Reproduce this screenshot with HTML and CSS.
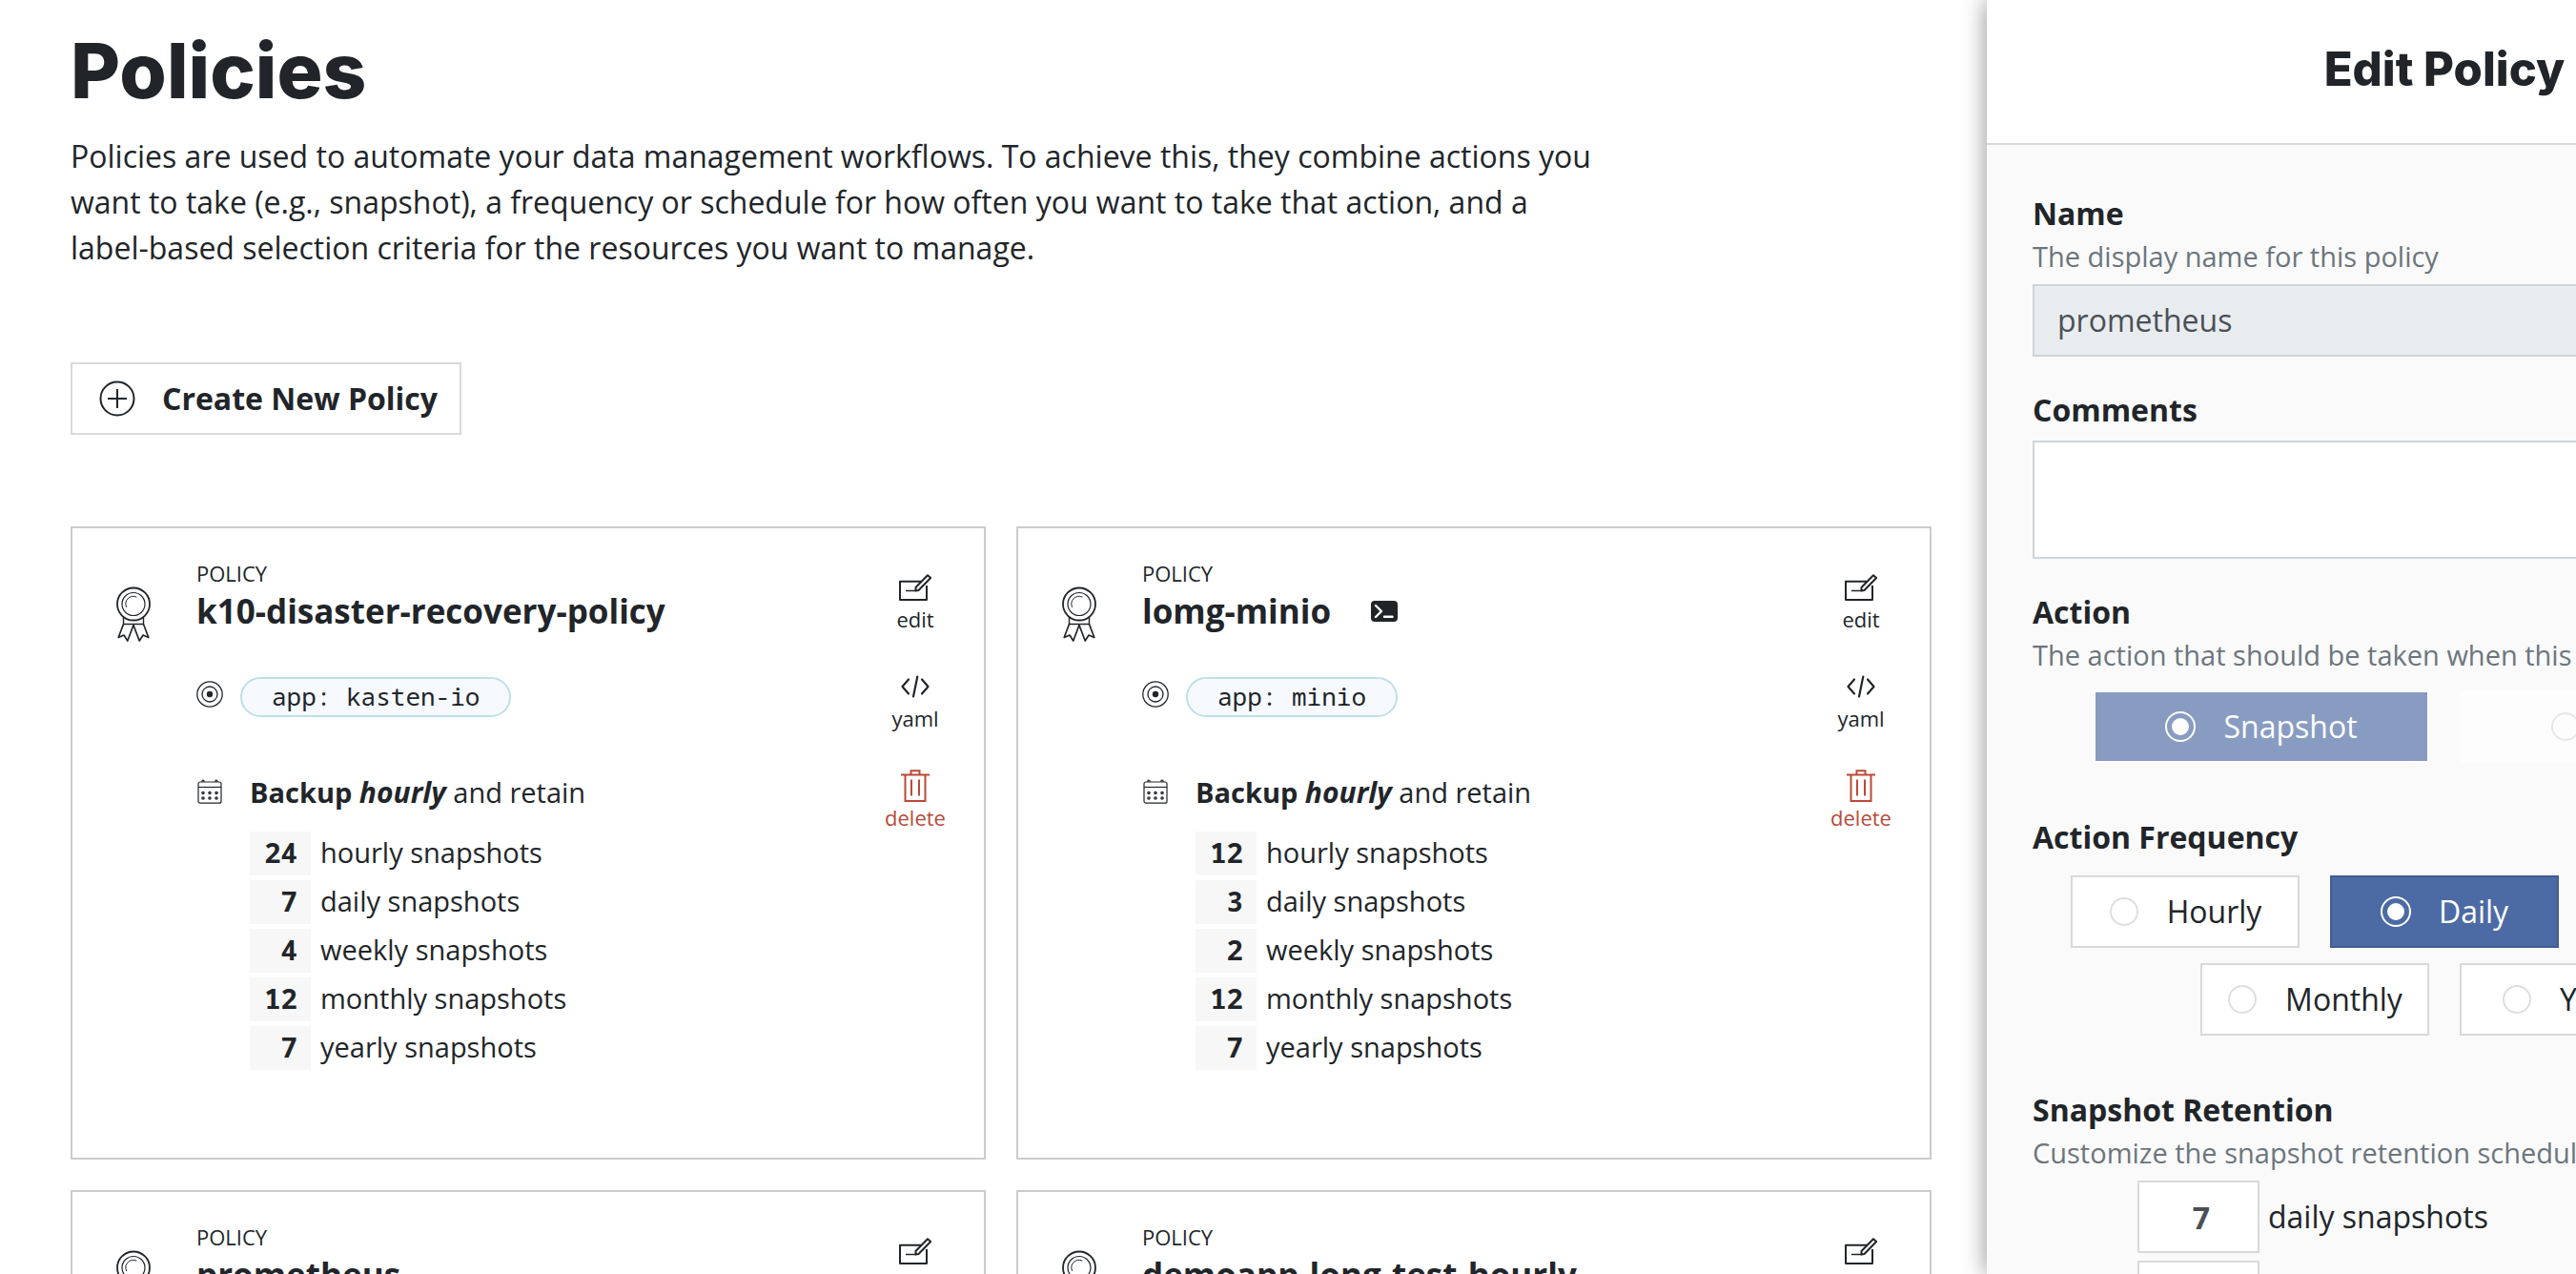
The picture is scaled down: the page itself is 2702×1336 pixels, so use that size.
FILE: index.html
```html
<!DOCTYPE html>
<html lang="en">
<head>
<meta charset="utf-8">
<title>Policies</title>
<meta name="viewport" content="width=device-width, initial-scale=1">
<link rel="stylesheet" href="styles.css">
</head>
<body>
<svg class="sprite" aria-hidden="true">
  <symbol id="i-award" viewBox="0 0 36 58">
    <g fill="none" stroke="currentColor" stroke-linejoin="round" stroke-linecap="round">
      <circle cx="18" cy="18.500" r="17" stroke-width="1.800"/>
      <circle cx="18" cy="18.500" r="12" stroke-width="1.200"/>
      <path d="M10.500 21.500a8 8 0 0 1 10.500-10.500" stroke-width="1"/>
      <path d="M7.500 32v7.500h21V32" stroke-width="1.400"/>
      <path d="M7.500 39.500 2.200 53.500l5.800-2.500 3.800 6L18 40.500l6.200 16.500 3.800-6 5.800 2.500-5.300-14" stroke-width="1.700"/>
    </g>
  </symbol>
  <symbol id="i-target" viewBox="0 0 28 28">
    <circle cx="14" cy="14" r="13.200" fill="none" stroke="currentColor" stroke-width="1.300"/>
    <circle cx="14" cy="14" r="8" fill="none" stroke="currentColor" stroke-width="1.300"/>
    <circle cx="14" cy="14" r="3.200" fill="currentColor"/>
  </symbol>
  <symbol id="i-calendar" viewBox="0 0 28 26">
    <g fill="none" stroke="currentColor" stroke-width="1.200">
      <rect x="2" y="3" width="24" height="22.200" rx="2"/>
      <path d="M2 8.500h24"/>
      <path d="M6 3V2a1 1 0 0 1 2 0v1M20 3V2a1 1 0 0 1 2 0v1"/>
      <g stroke-width="1.400">
        <circle cx="7" cy="14.500" r="1.100"/><circle cx="14" cy="14.500" r="1.100"/><circle cx="21" cy="14.500" r="1.100"/>
        <circle cx="7" cy="20" r="1.100"/><circle cx="14" cy="20" r="1.100"/><circle cx="21" cy="20" r="1.100"/>
      </g>
    </g>
  </symbol>
  <symbol id="i-edit" viewBox="0 0 34 34">
    <g fill="none" stroke="currentColor" stroke-width="2" stroke-linejoin="round">
      <path d="M23 10.800H1V30h28V15"/>
      <path d="M7 20.500h11" stroke-width="1.500"/>
      <path d="M17.500 20.500v-3.500L30 4.200l3.200 2.800L20.500 20z"/>
    </g>
  </symbol>
  <symbol id="i-code" viewBox="0 0 34 34">
    <g fill="none" stroke="currentColor" stroke-width="2.200" stroke-linecap="round" stroke-linejoin="round">
      <path d="M10 9.500 3.500 17l6.500 7.500M24 9.500l6.500 7.500-6.500 7.500"/>
      <path d="M19.300 6.500 15 27.500"/>
    </g>
  </symbol>
  <symbol id="i-trash" viewBox="0 0 34 34">
    <g fill="none" stroke="currentColor" stroke-width="2">
      <path d="M2 5.500h30M6.500 5.500v27.500h21V5.500M12.500 5.500V1.200h9v4.300"/>
      <path d="M13 10.500v17M21 10.500v17"/>
    </g>
  </symbol>
  <symbol id="i-plus" viewBox="0 0 38 38">
    <g fill="none" stroke="currentColor" stroke-width="2">
      <circle cx="19" cy="19" r="17.500"/><path d="M19 9v20M9 19h20"/>
    </g>
  </symbol>
  <symbol id="i-terminal" viewBox="0 0 28 22">
    <rect width="28" height="22" rx="4" fill="currentColor"/>
    <path d="M5 5l6 6-6 6M14 16.800h8.500" fill="none" stroke="#fff" stroke-width="2.400" stroke-linecap="round" stroke-linejoin="round"/>
  </symbol>
</svg>

<div class="app">
  <main class="main">
    <h1 class="page-title">Policies</h1>
    <p class="intro">Policies are used to automate your data management workflows. To achieve this, they combine actions you want to take (e.g., snapshot), a frequency or schedule for how often you want to take that action, and a label-based selection criteria for the resources you want to manage.</p>
    <button class="create" type="button"><svg class="create-icon"><use href="#i-plus"/></svg>Create New Policy</button>

    <div class="cards">
      <article class="card">
        <svg class="award"><use href="#i-award"/></svg>
        <div class="details">
          <p class="kind">POLICY</p>
          <h2 class="name">k10-disaster-recovery-policy</h2>
          <div class="selector"><svg class="target"><use href="#i-target"/></svg><code class="chip">app: kasten-io</code></div>
          <div class="schedule"><svg class="calendar"><use href="#i-calendar"/></svg><p><strong>Backup <em>hourly</em></strong> and retain</p></div>
          <ul class="retain">
            <li><b>24</b>hourly snapshots</li>
            <li><b>7</b>daily snapshots</li>
            <li><b>4</b>weekly snapshots</li>
            <li><b>12</b>monthly snapshots</li>
            <li><b>7</b>yearly snapshots</li>
          </ul>
        </div>
        <div class="actions">
          <button type="button"><svg><use href="#i-edit"/></svg>edit</button>
          <button type="button"><svg><use href="#i-code"/></svg>yaml</button>
          <button type="button" class="danger"><svg><use href="#i-trash"/></svg>delete</button>
        </div>
      </article>

      <article class="card">
        <svg class="award"><use href="#i-award"/></svg>
        <div class="details">
          <p class="kind">POLICY</p>
          <h2 class="name">lomg-minio <svg class="terminal"><use href="#i-terminal"/></svg></h2>
          <div class="selector"><svg class="target"><use href="#i-target"/></svg><code class="chip">app: minio</code></div>
          <div class="schedule"><svg class="calendar"><use href="#i-calendar"/></svg><p><strong>Backup <em>hourly</em></strong> and retain</p></div>
          <ul class="retain">
            <li><b>12</b>hourly snapshots</li>
            <li><b>3</b>daily snapshots</li>
            <li><b>2</b>weekly snapshots</li>
            <li><b>12</b>monthly snapshots</li>
            <li><b>7</b>yearly snapshots</li>
          </ul>
        </div>
        <div class="actions">
          <button type="button"><svg><use href="#i-edit"/></svg>edit</button>
          <button type="button"><svg><use href="#i-code"/></svg>yaml</button>
          <button type="button" class="danger"><svg><use href="#i-trash"/></svg>delete</button>
        </div>
      </article>

      <article class="card">
        <svg class="award"><use href="#i-award"/></svg>
        <div class="details">
          <p class="kind">POLICY</p>
          <h2 class="name">prometheus</h2>
        </div>
        <div class="actions">
          <button type="button" aria-label="edit"><svg><use href="#i-edit"/></svg></button>
        </div>
      </article>

      <article class="card">
        <svg class="award"><use href="#i-award"/></svg>
        <div class="details">
          <p class="kind">POLICY</p>
          <h2 class="name">demoapp-long-test-hourly</h2>
        </div>
        <div class="actions">
          <button type="button" aria-label="edit"><svg><use href="#i-edit"/></svg></button>
        </div>
      </article>
    </div>
  </main>

  <aside class="drawer">
    <header class="drawer-head"><h2 class="drawer-title">Edit Policy</h2></header>
    <form class="form">
      <div class="field">
        <label class="label" for="name">Name</label>
        <p class="hint">The display name for this policy</p>
        <input class="text" id="name" type="text" value="prometheus" readonly>
      </div>
      <div class="field">
        <label class="label" for="comments">Comments</label>
        <textarea class="text area" id="comments"></textarea>
      </div>
      <fieldset class="field">
        <legend class="label">Action</legend>
        <p class="hint">The action that should be taken when this policy is executed</p>
        <div class="choices wide">
          <label class="choice"><input type="radio" name="action" checked disabled>Snapshot</label>
          <label class="choice"><input type="radio" name="action" disabled>Import</label>
        </div>
      </fieldset>
      <fieldset class="field">
        <legend class="label">Action Frequency</legend>
        <div class="choices">
          <label class="choice"><input type="radio" name="frequency">Hourly</label>
          <label class="choice"><input type="radio" name="frequency" checked>Daily</label>
          <label class="choice"><input type="radio" name="frequency">Weekly</label>
          <label class="choice"><input type="radio" name="frequency">Monthly</label>
          <label class="choice"><input type="radio" name="frequency">Yearly</label>
        </div>
      </fieldset>
      <fieldset class="field">
        <legend class="label">Snapshot Retention</legend>
        <p class="hint">Customize the snapshot retention schedule</p>
        <div class="counts">
          <label class="count"><input type="text" value="7">daily snapshots</label>
          <label class="count"><input type="text" value="4" aria-label="weekly snapshots"></label>
        </div>
      </fieldset>
    </form>
  </aside>
</div>
</body>
</html>
```
FILE: styles.css
```css
*, *::before, *::after { box-sizing: border-box; }

:root {
  --ink: #212529;
  --muted: #6c757d;
  --line: #d9d9d9;
  --blue: #4c6ba5;
  --sans: "Open Sans", "Noto Sans", sans-serif;
  --display: Inter, "Open Sans", sans-serif;
  --mono: "Noto Sans Mono", "DejaVu Sans Mono", monospace;
}

body {
  margin: 0;
  overflow: hidden;
  background: #fff;
  color: var(--ink);
  font: 32px/48px var(--sans);
}

h1, h2, p, ul, fieldset { margin: 0; padding: 0; border: 0; font-weight: inherit; }
button, input, textarea { font: inherit; color: inherit; margin: 0; }
svg { display: block; flex: none; }
.sprite { position: absolute; width: 0; height: 0; }

.app { display: flex; height: 100vh; overflow: hidden; }

/* Policy list */
.main { flex: 1; min-width: 0; padding: 24px 58px 0 74px; overflow: hidden; }
.page-title { margin-bottom: 16px; font: 800 80px/100px var(--display); }
.intro { max-width: 1600px; margin-bottom: 96px; }

.create {
  display: flex;
  align-items: center;
  gap: 28px;
  height: 76px;
  margin-bottom: 96px;
  padding: 0 23px 0 28px;
  border: 2px solid var(--line);
  background: #fff;
  font-weight: 700;
}
.create-icon { width: 38px; height: 38px; }

.cards {
  display: grid;
  grid-template-columns: repeat(2, minmax(0, 1fr));
  grid-auto-rows: 1fr;
  gap: 32px;
}
.card {
  display: flex;
  gap: 48px;
  padding: 31px 40px 92px 46px;
  border: 2px solid #ccc;
}
.award { width: 36px; height: 58px; margin-top: 30px; }
.details { flex: 1; min-width: 0; font-size: 29px; line-height: 44px; }
.kind { font-size: 22px; line-height: 32px; }
.name { display: flex; align-items: center; gap: 42px; font-size: 35px; line-height: 48px; font-weight: 700; }
.terminal { width: 28px; height: 22px; }

.selector { display: flex; gap: 18px; margin-top: 45px; }
.target { width: 28px; height: 28px; margin-top: 4px; }
.chip {
  height: 42px;
  padding: 0 31px;
  border: 2px solid #bfdfe9;
  border-radius: 21px;
  background: #f6fafe;
  font: 26px/36px var(--mono);
}

.schedule { display: flex; gap: 28px; margin-top: 57px; }
.schedule em { font-size: 30px; }
.calendar { width: 28px; height: 26px; margin-top: 8px; }

.retain { display: grid; gap: 5px; margin-top: 19px; padding-left: 56px; list-style: none; }
.retain li { display: flex; gap: 10px; height: 46px; }
.retain b { width: 64px; padding-right: 14px; background: #f7f7f7; text-align: right; font-family: var(--mono); }

.actions { display: flex; flex-direction: column; gap: 38px; width: 64px; padding-top: 14px; }
.actions button {
  display: flex;
  flex-direction: column;
  align-items: center;
  padding: 0;
  border: 0;
  background: none;
  font-size: 22px;
  line-height: 32px;
}
.actions svg { width: 34px; height: 34px; }
.actions .danger { color: #b94a38; }

/* Edit drawer, partly slid past the right edge of the window */
.drawer {
  flex: 0 0 960px;
  margin-right: -342px;
  background: #fafafa;
  box-shadow: 0 0 24px rgba(0, 0, 0, .45);
}
.drawer-head { padding: 25px 0 29px; border-bottom: 2px solid var(--line); background: #fff; text-align: center; }
.drawer-title { font: 800 49px/96px var(--display); }
.form { display: grid; gap: 32px; padding: 48px; }
.label { display: block; padding: 0; font-weight: 700; }
.hint { color: var(--muted); font-size: 29px; line-height: 42px; }

.text {
  display: block;
  width: 100%;
  height: 76px;
  margin-top: 8px;
  padding: 0 24px 2px;
  border: 2px solid #ced4da;
  border-radius: 0;
  background: #fff;
  color: #495057;
}
.text[readonly] { background: #e9ecef; }
.area { height: 124px; resize: none; }

.choices { display: flex; flex-wrap: wrap; justify-content: center; gap: 16px 32px; padding: 16px 32px 22px; }
.choice {
  display: flex;
  align-items: center;
  justify-content: center;
  gap: 29px;
  width: 240px;
  height: 76px;
  border: 2px solid var(--line);
  background: #fff;
}
.wide .choice { width: 352px; }
.choice input {
  display: grid;
  place-items: center;
  appearance: none;
  width: 30px;
  height: 30px;
  margin: 0 1px;
  border: 2px solid #dedede;
  border-radius: 50%;
}
.choice input:checked { width: 32px; height: 32px; margin: 0; border-color: #fff; }
.choice input:checked::before { content: ""; width: 18px; height: 18px; border-radius: 50%; background: #fff; }
.choice:has(:checked) { border-color: #3f5d91; background: var(--blue); color: #fff; }
.choice:has(:disabled) { border-color: #fff; opacity: .65; }

.counts { display: grid; gap: 8px; padding: 8px 0 0 110px; }
.count { display: flex; align-items: center; gap: 9px; }
.count input {
  width: 128px;
  height: 76px;
  padding: 0 0 0 6px;
  border: 2px solid var(--line);
  background: #fff;
  color: #495057;
  font-weight: 700;
  text-align: center;
}
```
